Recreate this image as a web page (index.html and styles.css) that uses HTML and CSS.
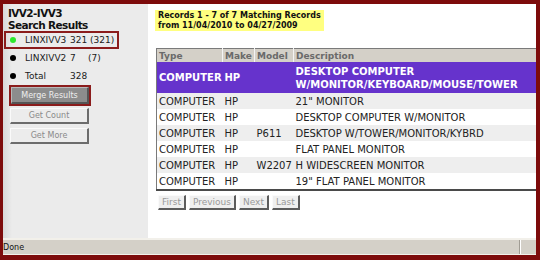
FILE: index.html
```html
<!DOCTYPE html>
<html>
<head>
    <title>IVV2-IVV3 Search Results</title>
    <link rel="stylesheet" href="styles.css">
</head>
<body>
    <div class="window">
        <div class="page">
            <div class="sidebar">
                <h1 class="title">IVV2-IVV3<br>Search Results</h1>
                <ul class="sources">
                    <li class="source selected">
                        <span class="dot on"></span>
                        <span class="name">LINXIVV3</span>
                        <span class="count">321 (321)</span>
                    </li>
                    <li class="source">
                        <span class="dot"></span>
                        <span class="name">LINXIVV2</span>
                        <span class="count short">7</span>
                        <span class="count">(7)</span>
                    </li>
                    <li class="source">
                        <span class="dot"></span>
                        <span class="name">Total</span>
                        <span class="count">328</span>
                    </li>
                </ul>
                <div class="actions">
                    <div class="merge-frame">
                        <button class="btn merge">Merge Results</button>
                    </div>
                    <button class="btn">Get Count</button>
                    <button class="btn more">Get More</button>
                </div>
            </div>

            <div class="main">
                <div class="summary">Records 1 - 7 of 7 Matching Records<br>from 11/04/2010 to 04/27/2009</div>

                <table class="results">
                    <colgroup>
                        <col class="col-type">
                        <col class="col-make">
                        <col class="col-model">
                        <col>
                    </colgroup>
                    <tr>
                        <th>Type</th>
                        <th>Make</th>
                        <th>Model</th>
                        <th>Description</th>
                    </tr>
                    <tr class="current">
                        <td>COMPUTER</td>
                        <td>HP</td>
                        <td></td>
                        <td>DESKTOP COMPUTER W/MONITOR/KEYBOARD/MOUSE/TOWER</td>
                    </tr>
                    <tr class="alt">
                        <td>COMPUTER</td>
                        <td>HP</td>
                        <td></td>
                        <td>21" MONITOR</td>
                    </tr>
                    <tr>
                        <td>COMPUTER</td>
                        <td>HP</td>
                        <td></td>
                        <td>DESKTOP COMPUTER W/MONITOR</td>
                    </tr>
                    <tr class="alt">
                        <td>COMPUTER</td>
                        <td>HP</td>
                        <td>P611</td>
                        <td>DESKTOP W/TOWER/MONITOR/KYBRD</td>
                    </tr>
                    <tr>
                        <td>COMPUTER</td>
                        <td>HP</td>
                        <td></td>
                        <td>FLAT PANEL MONITOR</td>
                    </tr>
                    <tr class="alt">
                        <td>COMPUTER</td>
                        <td>HP</td>
                        <td>W2207</td>
                        <td>H WIDESCREEN MONITOR</td>
                    </tr>
                    <tr>
                        <td>COMPUTER</td>
                        <td>HP</td>
                        <td></td>
                        <td>19" FLAT PANEL MONITOR</td>
                    </tr>
                </table>

                <div class="pager">
                    <button class="page-btn">First</button>
                    <button class="page-btn">Previous</button>
                    <button class="page-btn">Next</button>
                    <button class="page-btn">Last</button>
                </div>
            </div>
        </div>

        <div class="status">
            <span class="status-text">Done</span>
            <span class="status-cell"></span>
        </div>
    </div>
</body>
</html>
```

FILE: styles.css
```css
body {
    margin: 0;
}
.window {
    width: 540px;
    height: 260px;
    box-sizing: border-box;
    border-style: solid;
    border-color: #7d0b0b;
    border-width: 4px 4px 5px 3px;
    display: flex;
    flex-direction: column;
    font-family: "DejaVu Sans", Verdana, sans-serif;
    color: #1a1a1a;
}
.page {
    flex: 1;
    display: flex;
    min-height: 0;
}
.sidebar {
    width: 145px;
    background: linear-gradient(to right, #d8d8d8, #ebebeb 9px);
}
.title {
    margin: 0;
    padding: 3px 0 0 5px;
    font-size: 10.5px;
    line-height: 12px;
    letter-spacing: -0.6px;
    font-weight: bold;
    color: #111;
}
.sources {
    list-style: none;
    margin: 0;
    padding: 0;
}
.source {
    box-sizing: border-box;
    width: 115px;
    height: 18px;
    margin-left: 1px;
    padding-left: 4px;
    border: 2px solid transparent;
    display: flex;
    align-items: center;
    font-size: 9px;
}
.source.selected {
    border-color: #8b1c1c;
}
.dot {
    width: 6px;
    height: 6px;
    border-radius: 50%;
    background: #000;
    margin-right: 9px;
}
.dot.on {
    background: #2ee82e;
}
.name {
    width: 45px;
}
.count.short {
    width: 18px;
}
.actions {
    padding-left: 6px;
}
.merge-frame {
    box-sizing: border-box;
    width: 82px;
    height: 21px;
    border: 2px solid #8b1c1c;
}
.btn {
    display: block;
    box-sizing: border-box;
    width: 79px;
    height: 16px;
    margin: 2px 0 0 1px;
    padding: 0;
    background: #ececec;
    color: #8a8a8a;
    border-style: solid;
    border-width: 1px 2px 2px 1px;
    border-color: #fafafa #6c6c6c #6c6c6c #fafafa;
    font-family: inherit;
    font-size: 8px;
}
.btn.merge {
    width: 100%;
    height: 100%;
    margin: 0;
    background: #8c8c8c;
    color: #eeeeee;
    border-color: #b8b8b8 #555 #555 #b8b8b8;
}
.btn.more {
    margin-top: 4px;
}
.main {
    flex: 1;
    min-width: 0;
    background: #fff;
    overflow: hidden;
    padding: 6px 0 0 7px;
}
.summary {
    display: inline-block;
    background: #ffff80;
    padding: 1px 3px 0;
    font-size: 8px;
    line-height: 10px;
    font-weight: bold;
    color: #111;
}
.results {
    margin: 16px 0 0 1px;
    width: 383px;
    border-collapse: collapse;
    table-layout: fixed;
    border-left: 1px solid #7a7a7a;
    border-top: 1px solid #7a7a7a;
    border-bottom: 2px solid #4a4a4a;
    font-size: 10px;
}
.col-type {
    width: 66px;
}
.col-make {
    width: 32px;
}
.col-model {
    width: 39px;
}
.results th {
    height: 13px;
    padding: 0 2px;
    background: #d4d0c8;
    color: #6a6a6a;
    font-size: 9px;
    text-align: left;
    border-right: 1px solid #f4f4f4;
}
.results td {
    height: 16px;
    padding: 0 2px;
    white-space: nowrap;
    color: #222;
}
.results tr.alt td {
    background: #eeeeee;
}
.results tr.current td {
    height: 29px;
    padding: 1px 2px;
    background: #6633cc;
    color: #fff;
    font-weight: bold;
    line-height: 13px;
    white-space: normal;
}
.pager {
    display: flex;
    gap: 3px;
    margin: 4px 0 0 3px;
}
.page-btn {
    height: 15px;
    padding: 0 3px;
    background: #efefef;
    color: #9a9a9a;
    border-style: solid;
    border-width: 1px 2px 2px 1px;
    border-color: #fafafa #5c5c5c #5c5c5c #fafafa;
    font-family: inherit;
    font-size: 9px;
}
.status {
    height: 17px;
    box-sizing: border-box;
    display: flex;
    align-items: center;
    background: #d4d0c8;
    border-top: 2px solid #f2f0ea;
    border-bottom: 1px solid #f2f0ea;
    font-size: 8px;
    color: #111;
}
.status-text {
    flex: 1;
}
.status-cell {
    width: 16px;
    height: 100%;
    border-left: 1px solid #a09c94;
    box-shadow: inset 1px 0 0 #fff;
}
```
